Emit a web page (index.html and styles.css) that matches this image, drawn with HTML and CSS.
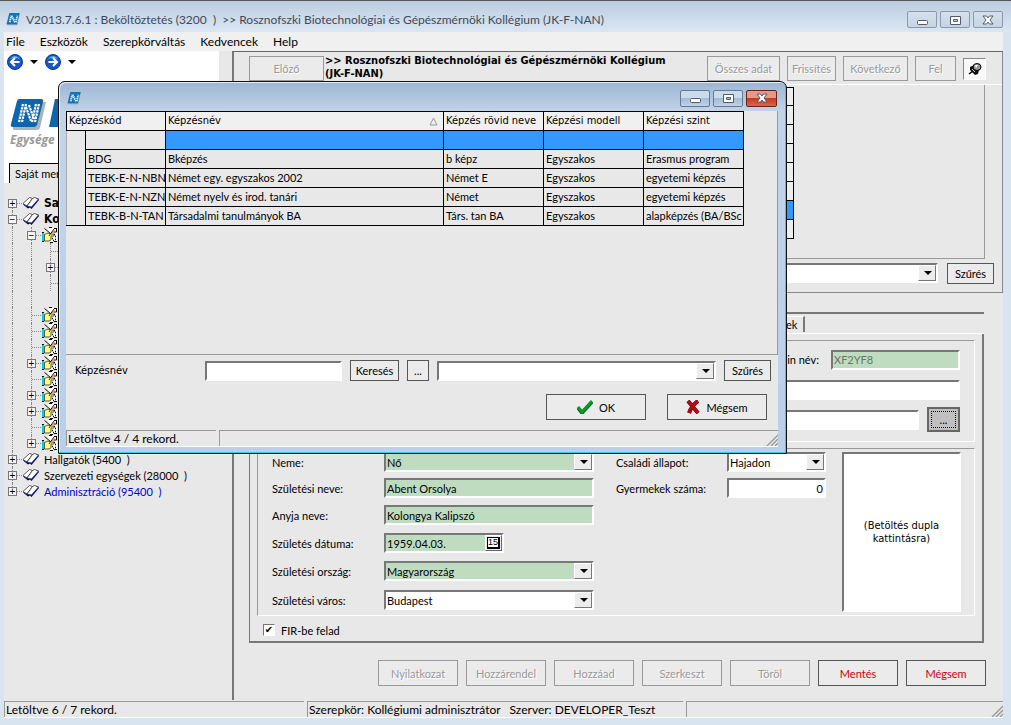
FILE: index.html
```html
<!DOCTYPE html>
<html lang="hu">
<head>
<meta charset="utf-8">
<title>Beköltöztetés (3200)</title>
<link rel="stylesheet" href="styles.css">
</head>
<body>
<svg class="defs" aria-hidden="true">
  <symbol id="app" viewBox="0 0 16 16">
    <path d="M4 1h11l-3 13H1z" fill="#8fa9bb"/><path d="M3.500 1h11L11.500 13H.5z" fill="#1572b5"/>
    <path d="M4 11l1.500-7M6 4l3.500 7M10.500 11L12 4" fill="none" stroke="#d9f1ff" stroke-width="2" stroke-dasharray="1.500 .6"/>
  </symbol>
  <symbol id="book" viewBox="0 0 18 14">
    <path d="M1 8.500l5 4 2-1 1.500 1.500L17 4l-1-2z" fill="#000080"/>
    <path d="M1 7.500L7.500 1.500l3 1L5 10z" fill="#fff" stroke="#333" stroke-width=".8"/>
    <path d="M10.500 2.500l2-1 4 1.500-7 8L5 10z" fill="#fff" stroke="#333" stroke-width=".8"/>
  </symbol>
  <symbol id="note" viewBox="0 0 16 16">
    <path d="M6 1h9v14H8z" fill="#fff"/>
    <path d="M7 .5h3M12 1.500h2M14.500 1v4h-3M8 15.500h3M12 14.500h3" fill="none" stroke="#000"/>
    <path d="M12 7.500h1M13 9.500h1M10 11.500h1M13 12.500h1M11 13.500h1" stroke="#000" stroke-width="1.500"/>
    <path d="M0 6h2v8H0z" fill="#00d0e0"/><path d="M0 5.500h2M0 14.500h2" stroke="#000"/>
    <path d="M2.500 7.500L6 6l3 1h3v2H9v4l-2 1H2.500z" fill="#ffff80" stroke="#332" stroke-width=".8"/>
    <path d="M2.500 1.500l6 5M12 2L7 9" stroke="#111"/><path d="M12.500 3L8 8.500" stroke="#e80"/>
  </symbol>
  <symbol id="min" viewBox="0 0 12 12"><rect x="1.500" y="6.500" width="10" height="4" rx="1" fill="#fff" stroke="#555a68"/></symbol>
  <symbol id="max" viewBox="0 0 12 12"><path d="M1.500 2.500h10v8h-10zM4.500 5.500h4v2h-4z" fill="#fff" fill-rule="evenodd" stroke="#555a68"/></symbol>
  <symbol id="close" viewBox="0 0 12 12"><path d="M1 2h3.500L6 4l1.500-2H11L8 6l3 4H7.500L6 8l-1.500 2H1l3-4z" fill="#fff" stroke="#555a68"/></symbol>
  <symbol id="grip" viewBox="0 0 12 12"><path d="M1 12L12 1M5 12l7-7M9 12l3-3" stroke="#999" stroke-width="1.400"/></symbol>
</svg>

<div class="window">
  <header class="titlebar">
    <svg class="app-icon"><use href="#app"/></svg>
    <h1>V2013.7.6.1 : Beköltöztetés (3200&nbsp; ) &nbsp;&gt;&gt; Rosznofszki Biotechnológiai és Gépészmérnöki Kollégium (JK-F-NAN)</h1>
    <div class="win-buttons">
      <button aria-label="Kis méret"><svg><use href="#min"/></svg></button>
      <button aria-label="Teljes méret"><svg><use href="#max"/></svg></button>
      <button aria-label="Bezárás"><svg><use href="#close"/></svg></button>
    </div>
  </header>
  <nav class="menubar">
    <button>File</button><button>Eszközök</button><button>Szerepkörváltás</button><button>Kedvencek</button><button>Help</button>
  </nav>

  <div class="main">
    <aside class="side">
      <div class="side-head">
        <div class="nav">
          <button aria-label="Vissza"><svg viewBox="0 0 16 16"><circle cx="8" cy="8" r="7.500" fill="#1758c8" stroke="#0c358f"/><path d="M3 5q5-6 10 0-5-2-10 0" fill="#77aef2"/><path d="M12.500 8h-8M8 4L4 8l4 4" fill="none" stroke="#fff" stroke-width="2"/></svg></button>
          <i class="caret"></i>
          <button aria-label="Előre"><svg viewBox="0 0 16 16"><circle cx="8" cy="8" r="7.500" fill="#1758c8" stroke="#0c358f"/><path d="M3 5q5-6 10 0-5-2-10 0" fill="#77aef2"/><path d="M3.500 8h8M8 4l4 4-4 4" fill="none" stroke="#fff" stroke-width="2"/></svg></button>
          <i class="caret"></i>
        </div>
        <svg class="logo" viewBox="0 0 60 32">
          <path d="M11 3h26l-6 26q-1 2-3 2H6q-3 0-2-3z" fill="#a9b3ba"/>
          <path d="M10 0h22q3 0 2 3l-6 23q-1 2-3 2H4q-3 0-2-3L8 2q1-2 2-2z" fill="#0c66ad"/>
          <path d="M10 23l4-18M13 23l4-18M17 8l5 14M20 6l5 14M23 23l4-18M26 23l4-18" stroke="#fff" stroke-width="2.200" stroke-dasharray="2.400 .8" fill="none"/>
          <path d="M46 0h14v28H40z" fill="#0c66ad"/>
        </svg>
        <p class="slogan">Egysége</p>
      </div>
      <div class="side-tabs"><button>Saját mer</button></div>
      <ul class="tree">
        <li><i class="c first join"><b>+</b></i><svg class="book"><use href="#book"/></svg><strong>Sa</strong></li>
        <li><i class="c v join"><b>−</b></i><svg class="book"><use href="#book"/></svg><strong>Ko</strong></li>
        <li><i class="c v"></i><i class="c v join"><b>−</b></i><svg class="note"><use href="#note"/></svg></li>
        <li><i class="c v"></i><i class="c v"></i><i class="c v join"></i></li>
        <li><i class="c v"></i><i class="c v"></i><i class="c v join"><b>+</b></i></li>
        <li><i class="c v"></i><i class="c v"></i><i class="c v join"></i></li>
        <li><i class="c v"></i><i class="c v"></i></li>
        <li><i class="c v"></i><i class="c v join"></i><svg class="note"><use href="#note"/></svg></li>
        <li><i class="c v"></i><i class="c v join"></i><svg class="note"><use href="#note"/></svg></li>
        <li><i class="c v"></i><i class="c v join"></i><svg class="note"><use href="#note"/></svg></li>
        <li><i class="c v"></i><i class="c v join"><b>+</b></i><svg class="note"><use href="#note"/></svg></li>
        <li><i class="c v"></i><i class="c v join"></i><svg class="note"><use href="#note"/></svg></li>
        <li><i class="c v"></i><i class="c v join"><b>+</b></i><svg class="note"><use href="#note"/></svg></li>
        <li><i class="c v"></i><i class="c v join"><b>+</b></i><svg class="note"><use href="#note"/></svg></li>
        <li><i class="c v"></i><i class="c v join"></i><svg class="note"><use href="#note"/></svg></li>
        <li><i class="c v"></i><i class="c last join"><b>+</b></i><svg class="note"><use href="#note"/></svg></li>
        <li><i class="c v join"><b>+</b></i><svg class="book"><use href="#book"/></svg><span>Hallgatók (5400&nbsp; )</span></li>
        <li><i class="c v join"><b>+</b></i><svg class="book"><use href="#book"/></svg><span>Szervezeti egységek (28000&nbsp; )</span></li>
        <li><i class="c last join"><b>+</b></i><svg class="book"><use href="#book"/></svg><span class="blue">Adminisztráció (95400&nbsp; )</span></li>
      </ul>
    </aside>

    <main class="content">
      <section class="browser">
        <div class="toolbar">
          <button class="btn prev" disabled>Előző</button>
          <h2>&gt;&gt; Rosznofszki Biotechnológiai és Gépészmérnöki Kollégium<br>(JK-F-NAN)</h2>
          <button class="btn wide" disabled>Összes adat</button>
          <button class="btn norm" disabled>Frissítés</button>
          <button class="btn mid" disabled>Következő</button>
          <button class="btn small" disabled>Fel</button>
          <button class="pin" aria-label="Rögzítés"><svg viewBox="0 0 14 14"><path d="M1 12l4-3" stroke="#000" stroke-width="1.500"/><path d="M2 5l4-2 5 5-1 4-3 1-5-5z" fill="#111"/><path d="M4 7l3 3" stroke="#ccc"/><ellipse cx="9" cy="5" rx="4" ry="3.500" fill="#999" stroke="#000"/><path d="M7 3h3L8 6z" fill="#fff"/></svg></button>
        </div>
        <div class="back-grid">
          <div class="back-table"><i></i><i></i><i></i><i></i><i></i><i></i><i class="sel"></i><i></i></div>
        </div>
        <div class="filter">
          <span class="combo grow"><select aria-label="Szűrő"><option></option></select></span>
          <button class="btn filter-btn">Szűrés</button>
        </div>
      </section>

      <section class="tabs">
        <div class="tab-row"><button class="tab">ek</button></div>
        <div class="page">
          <div class="group ids">
            <div class="line"><label for="login">in név:</label><input id="login" class="green dim w128" value="XF2YF8"></div>
            <div class="line"><input class="full" aria-label="Név"></div>
            <div class="line"><input class="full" aria-label="Egység"><button class="pick">...</button></div>
          </div>
          <div class="group person">
            <div class="fields">
              <label for="sex">Neme:</label><span class="combo green"><select id="sex"><option>Nő</option></select></span>
              <label for="bname">Születési neve:</label><input id="bname" class="green" value="Abent Orsolya">
              <label for="mother">Anyja neve:</label><input id="mother" class="green" value="Kolongya Kalipszó">
              <label for="bdate">Születés dátuma:</label><span class="date"><input id="bdate" class="green" value="1959.04.03."><button aria-label="Naptár"><span>15</span></button></span>
              <label for="country">Születési ország:</label><span class="combo green"><select id="country"><option>Magyarország</option></select></span>
              <label for="city">Születési város:</label><span class="combo"><select id="city"><option>Budapest</option></select></span>
            </div>
            <div class="fields second">
              <label for="marital">Családi állapot:</label><span class="combo"><select id="marital"><option>Hajadon</option></select></span>
              <label for="kids">Gyermekek száma:</label><input id="kids" class="num" value="0">
            </div>
            <div class="photo">(Betöltés dupla kattintásra)</div>
          </div>
          <label class="check"><input type="checkbox" checked>FIR-be felad</label>
        </div>
      </section>

      <div class="actions">
        <button class="btn" disabled>Nyilatkozat</button><button class="btn" disabled>Hozzárendel</button><button class="btn" disabled>Hozzáad</button><button class="btn" disabled>Szerkeszt</button><button class="btn" disabled>Töröl</button><button class="btn red">Mentés</button><button class="btn red">Mégsem</button>
      </div>
    </main>
  </div>

  <footer class="status">
    <span class="s1">Letöltve 6 / 7 rekord.</span><span class="s2">Szerepkör: Kollégiumi adminisztrátor &nbsp; Szerver: DEVELOPER_Teszt</span><span class="s3"><svg class="grip"><use href="#grip"/></svg></span>
  </footer>
</div>

<div class="dialog" role="dialog" aria-label="Képzés választó">
  <header class="dialog-title">
    <svg class="app-icon"><use href="#app"/></svg>
    <div class="win-buttons">
      <button aria-label="Kis méret"><svg><use href="#min"/></svg></button>
      <button aria-label="Teljes méret"><svg><use href="#max"/></svg></button>
      <button class="danger" aria-label="Bezárás"><svg><use href="#close"/></svg></button>
    </div>
  </header>
  <div class="dialog-body">
    <div class="grid">
      <table>
        <colgroup><col class="k0"><col class="k1"><col class="k2"><col class="k3"><col class="k3"><col class="k3"></colgroup>
        <thead><tr><th colspan="2">Képzéskód</th><th><span class="sort">Képzésnév<svg viewBox="0 0 9 9"><path d="M4.500 1L8 8H1z" fill="none" stroke="#999"/></svg></span></th><th>Képzés rövid neve</th><th>Képzési modell</th><th>Képzési szint</th></tr></thead>
        <tbody>
          <tr class="active"><td class="gutter" rowspan="5"></td><td></td><td></td><td></td><td></td><td></td></tr>
          <tr><td>BDG</td><td>Bképzés</td><td>b képz</td><td>Egyszakos</td><td>Erasmus program</td></tr>
          <tr><td>TEBK-E-N-NBN</td><td>Német egy. egyszakos 2002</td><td>Német E</td><td>Egyszakos</td><td>egyetemi képzés</td></tr>
          <tr><td>TEBK-E-N-NZN</td><td>Német nyelv és irod. tanári</td><td>Német</td><td>Egyszakos</td><td>egyetemi képzés</td></tr>
          <tr><td>TEBK-B-N-TAN</td><td>Társadalmi tanulmányok BA</td><td>Társ. tan BA</td><td>Egyszakos</td><td>alapképzés (BA/BSc</td></tr>
        </tbody>
      </table>
    </div>
    <div class="search">
      <label for="q">Képzésnév</label><input id="q" autofocus>
      <button class="btn norm">Keresés</button><button class="btn dots">...</button>
      <span class="combo grow"><select aria-label="Mező"><option></option></select></span>
      <button class="btn filter-btn">Szűrés</button>
    </div>
    <div class="confirm">
      <button class="btn"><svg viewBox="0 0 16 14"><path d="M1 8l4 5L15 2" fill="none" stroke="#055" stroke-width="3.500"/><path d="M1 7l4 5L15 1" fill="none" stroke="#0a9a1c" stroke-width="3"/></svg>OK</button>
      <button class="btn"><svg class="x" viewBox="0 0 14 14"><path d="M2 1l10 12M12 1Q6 5 3 13" fill="none" stroke="#600" stroke-width="4"/><path d="M2 1l10 12M12 1Q6 5 3 13" fill="none" stroke="#b00c18" stroke-width="3"/></svg>Mégsem</button>
    </div>
    <footer class="status"><span class="d1">Letöltve 4 / 4 rekord.</span><span class="s3"><svg class="grip"><use href="#grip"/></svg></span></footer>
  </div>
</div>
</body>
</html>
```
FILE: styles.css
```css
* { box-sizing: border-box; }
body {
  margin: 0;
  background: #d8e4ef;
  color: #000;
  font: 11px/13px Lato, "Liberation Sans", sans-serif;
}
button, input, select { font: inherit; color: inherit; margin: 0; border-radius: 0; }
button { background: none; border: 0; padding: 0; white-space: nowrap; }
h1, h2, p, ul { margin: 0; padding: 0; }
svg { display: block; flex: none; }
.defs { position: absolute; width: 0; height: 0; }

.window { display: flex; flex-direction: column; min-height: 100vh; padding: 0 8px 7px 4px; border-top: 1px solid #555; }
.titlebar { display: flex; align-items: center; height: 31px; margin: 0 -8px 0 -4px; padding: 6px 8px 0 6px; background: linear-gradient(#bccde0, #dbe6f2); }
.titlebar h1 { flex: 1; margin-left: 5px; font: 12px/16px Lato, sans-serif; color: #3f4a58; white-space: nowrap; }
.app-icon { width: 15px; height: 15px; }
.win-buttons { display: flex; gap: 3px; }
.win-buttons button { display: grid; place-items: center; width: 30px; height: 17px; border: 1px solid #8b98ac; border-radius: 2px; background: linear-gradient(#d5e0ec, #c5d4e4); }
.win-buttons svg { width: 12px; height: 12px; }
.menubar { display: flex; gap: 15px; height: 19px; padding-left: 2px; background: #f0f0f0; font: 12px/18px Lato, sans-serif; }

.main { display: flex; flex: 1; background: #e8e8e8; }
.side { width: 228px; flex: none; }
.side-head { width: 215px; height: 112px; background: #fff; }
.nav { display: flex; align-items: center; gap: 7px; padding: 3px; }
.nav svg { width: 16px; height: 16px; }
.caret { border: 4px solid transparent; border-top-color: #000; border-bottom: 0; }
.logo { width: 60px; height: 32px; margin: 26px 0 0 5px; }
.slogan { padding: 1px 0 0 6px; color: #999; font: italic bold 12px/16px "Open Sans", sans-serif; }
.side-tabs { height: 20px; border-left: 5px solid #fff; }
.side-tabs button { height: 20px; padding: 0 5px; border-top: 1px solid #000; border-left: 1px solid #000; }
.tree { list-style: none; padding: 12px 0 0; }
.tree li { display: flex; align-items: center; height: 16px; margin-left: -1px; }
.tree span, .tree strong { margin-left: 4px; white-space: nowrap; }
.tree strong { font: bold 12px/16px "DejaVu Sans Condensed", sans-serif; }
.blue { color: #0000d0; }
.c { position: relative; display: grid; place-items: center; width: 19px; height: 16px; flex: none; }
.c::before { content: ""; position: absolute; left: 9px; top: 0; bottom: 0; }
.c.v::before, .c.first::before, .c.last::before { border-left: 1px dotted #888; }
.c.first::before { top: 8px; }
.c.last::before { bottom: 8px; }
.c.join::after { content: ""; position: absolute; left: 10px; right: 0; top: 8px; border-top: 1px dotted #888; }
.c b { position: relative; z-index: 1; width: 9px; height: 9px; border: 1px solid #777; background: #f4f4f4; font: 10px/7px "Liberation Sans", sans-serif; text-align: center; }
.book { width: 18px; height: 14px; }
.note { width: 16px; height: 16px; margin-left: 1px; }

.content { display: flex; flex-direction: column; flex: 1; min-width: 0; border-top: 1px solid #666; border-left: 2px solid #777; }
.browser { border-right: 1px solid #888; border-bottom: 1px solid #888; }
.toolbar { display: flex; gap: 7px; padding: 4px 16px 3px 15px; border-bottom: 1px solid #fff; }
.toolbar h2 { flex: 1; margin: -2px 0 0 -6px; font: bold 11px/13px "DejaVu Sans Condensed", sans-serif; white-space: nowrap; }
.btn { height: 21px; padding: 0; border: 1px solid #555; background: #ebebeb; text-align: center; }
.btn:disabled { color: #999; border-color: #999; text-shadow: 1px 1px #fff; }
.norm { width: 49px; }
.filter-btn { width: 47px; }
.toolbar .btn { height: 25px; }
.toolbar .prev { width: 75px; }
.toolbar .wide { width: 73px; }
.toolbar .mid { width: 65px; }
.toolbar .small { width: 41px; }
.pin { display: grid; place-items: center; width: 23px; height: 22px; margin-top: 2px; background: #f8f8f8; border: 1px solid; border-color: #888 #fff #fff #888; }
.pin svg { width: 14px; height: 14px; }
.back-grid { height: 174px; margin-right: 17px; padding-top: 2px; border-right: 1px solid #999; border-bottom: 1px solid #999; }
.back-table { width: 560px; border-top: 1px solid #000; border-right: 1px solid #000; }
.back-table i { display: block; height: 19px; border-bottom: 1px solid #000; background: #ededed; }
.back-table i:first-child { height: 18px; }
.back-table .sel { background: #39f; }
.filter { display: flex; gap: 9px; padding: 4px 8px 8px 16px; }

input, .combo, .photo { border: 2px solid; border-color: #777 #fff #fff #777; background: #fff; }
input { height: 20px; padding: 0 1px; outline: 0; min-width: 0; }
.combo { display: flex; position: relative; height: 20px; }
.combo select { appearance: none; flex: 1; min-width: 0; padding: 0 20px 0 1px; border: 0; background: transparent; outline: 0; }
.combo::after { content: ""; position: absolute; right: 0; top: 0; bottom: 0; width: 16px; border: 1px solid; border-color: #fff #777 #777 #fff; background: #ececec; pointer-events: none; }
.combo::before { content: ""; position: absolute; z-index: 1; right: 4px; top: 6px; border: 4px solid transparent; border-top-color: #000; border-bottom: 0; pointer-events: none; }
input.green, .combo.green { background: #c0dcc0; }
.grow { flex: 1; }

.tabs { margin: 19px 19px 0 15px; border-top: 2px solid #777; border-left: 1px solid #777; }
.tab-row { display: flex; height: 20px; padding: 2px 0 1px 536px; border-bottom: 1px solid #fff; }
.tab { width: 19px; border-right: 2px solid #777; border-top: 1px solid #fff; text-align: left; }
.page { padding: 6px 7px 0; border-right: 2px solid #777; border-bottom: 2px solid #777; }
.group { border: 1px solid; border-color: #999 #fff #fff #999; }
.ids { display: flex; flex-direction: column; gap: 5px; padding: 6px 14px; height: 102px; }
.line { display: flex; align-items: center; justify-content: flex-end; gap: 8px; height: 25px; }
.line label { margin-right: 4px; }
.dim { color: #667566; }
.w128 { width: 129px; }
.full { flex: 1; }
.pick { width: 33px; height: 25px; border: 2px solid #666; outline: 1px dotted #000; outline-offset: -5px; background: #c0c0c0; }
.person { display: flex; margin-top: 6px; }
.fields { display: grid; grid-template-columns: 112px 210px; grid-template-rows: 26px 26px 28px 28px 28px 30px; align-items: center; margin-left: 14px; white-space: nowrap; }
.second { grid-template-columns: 111px 99px; margin-left: 22px; }
.num { text-align: right; }
.date { display: flex; width: 120px; position: relative; }
.date input { width: 100%; }
.date button { position: absolute; right: 2px; top: 2px; width: 17px; height: 16px; padding: 1px; border: 1px solid; border-color: #fff #666 #666 #fff; background: #ececec; }
.date button span { display: block; border: 1px solid #000; border-width: 1px 2px 2px 1px; background: #fff; font: 9px/9px "Liberation Sans", sans-serif; }
.photo { display: grid; place-items: center; width: 119px; height: 160px; margin: 3px 13px 0 auto; padding: 0 10px; text-align: center; font: 11px/13px "DejaVu Sans Condensed", sans-serif; }
.check { display: flex; align-items: center; gap: 6px; height: 25px; padding: 3px 0 0 6px; }
.check input { appearance: none; width: 12px; height: 12px; display: grid; place-items: center; border-width: 1px; padding: 0; }
.check input:checked::after { content: "✔"; font: 10px/10px "DejaVu Sans", sans-serif; }
.actions { display: flex; justify-content: flex-end; gap: 8px; padding: 17px 17px 13px; }
.actions .btn { width: 80px; height: 26px; }
.actions .red { color: #d00010; }

.status { display: flex; gap: 3px; height: 18px; padding-top: 1px; background: #e8e8e8; font: 12px/16px Lato, sans-serif; white-space: nowrap; border-bottom: 1px solid #fff; }
.status span { border: 1px solid #999; border-width: 1px 0 0 1px; padding-left: 1px; }
.s1 { width: 300px; }
.s2 { width: 376px; }
.status .s3 { flex: 1; display: flex; justify-content: flex-end; align-items: flex-end; }
.grip { width: 12px; height: 12px; }

.dialog { position: absolute; left: 58px; top: 81px; width: 729px; padding: 0 8px 6px 7px; border: 1px solid #111; border-radius: 7px 7px 0 0; background: linear-gradient(#9db6d3, #c2d4e8 30px, #b9cfea); box-shadow: inset -1px -1px #3ccbd8, inset 1px 1px #e4edf6; }
.dialog-title { display: flex; align-items: center; justify-content: space-between; height: 29px; padding: 3px 1px 0; }
.dialog .win-buttons button { background: linear-gradient(#c9dbed 48%, #a2bbd6 50%, #bfd2e8); border-color: #64788f; }
.dialog .win-buttons .danger { width: 31px; background: linear-gradient(#e59a86 45%, #c63a22 50%, #d9664a); border-color: #702018; }
.dialog-body { background: #e8e8e8; }
.grid { height: 244px; border: 1px solid #999; border-width: 0 1px 1px 0; }
.grid table { width: 678px; border-collapse: collapse; table-layout: fixed; }
.k0 { width: 19px; }
.k1 { width: 80px; }
.k2 { width: 278px; }
.k3 { width: 100px; }
.grid th, .grid td { height: 19px; padding: 0 2px; border: 1px solid #000; overflow: hidden; white-space: nowrap; text-align: left; line-height: 16px; }
.grid th { background: #f0f0f0; font: 11px/16px "DejaVu Sans Condensed", sans-serif; }
.grid td.gutter { border-left-color: #aaa; }
.active td:nth-child(n+3) { background: #39f; }
.sort { display: flex; justify-content: space-between; align-items: center; padding-right: 3px; }
.sort svg { width: 9px; height: 9px; }
.search { display: flex; align-items: center; gap: 8px; padding: 5px 7px 0 9px; }
.search label { width: 122px; font: 11px/13px "DejaVu Sans Condensed", sans-serif; }
.search input { width: 137px; }
.search .dots { width: 22px; }
.confirm { display: flex; justify-content: flex-end; gap: 21px; padding: 13px 11px 9px; }
.confirm .btn { display: flex; align-items: center; justify-content: center; gap: 6px; width: 100px; height: 26px; }
.confirm svg { width: 16px; height: 14px; }
.confirm .x { width: 14px; }
.d1 { width: 150px; }
```
